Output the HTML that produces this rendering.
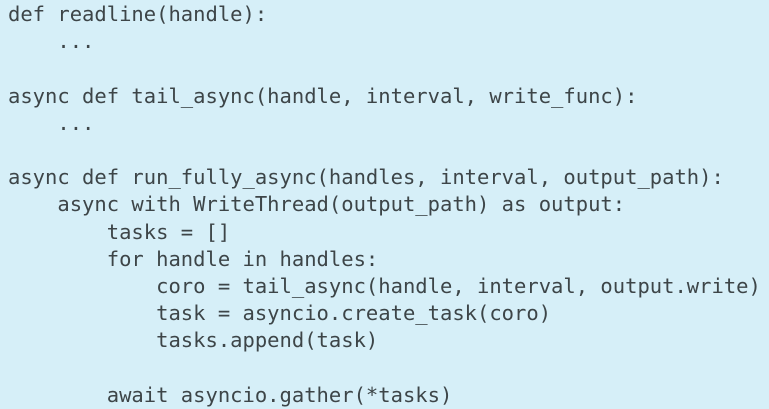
<!DOCTYPE html>
<html><head><meta charset="utf-8"><style>
html,body{margin:0;padding:0;width:769px;height:409px;overflow:hidden;background:#d6eff8;}
pre{margin:0;position:absolute;left:8px;top:1px;font-family:"DejaVu Sans Mono","Liberation Mono",monospace;font-size:20.5px;line-height:27.2px;color:#3d4548;}
</style></head><body><pre>def readline(handle):
    ...

async def tail_async(handle, interval, write_func):
    ...

async def run_fully_async(handles, interval, output_path):
    async with WriteThread(output_path) as output:
        tasks = []
        for handle in handles:
            coro = tail_async(handle, interval, output.write)
            task = asyncio.create_task(coro)
            tasks.append(task)

        await asyncio.gather(*tasks)</pre></body></html>
